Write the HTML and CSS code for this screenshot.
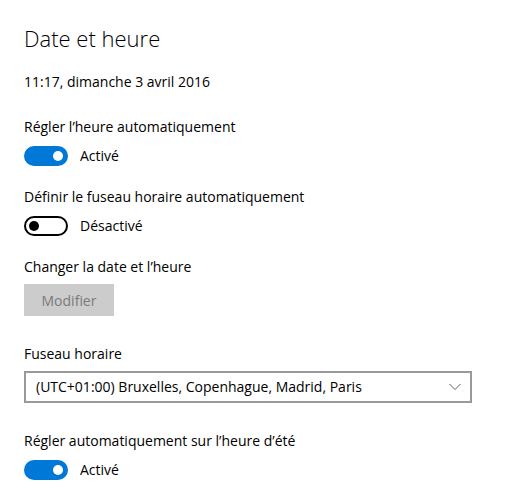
FILE: index.html
```html
<!DOCTYPE html>
<html lang="fr">
<head>
    <meta charset="UTF-8">
    <meta name="viewport" content="width=device-width, initial-scale=1.0">
    <title>Date et heure</title>
    <link rel="stylesheet" href="styles.css">
</head>
<body>

    <div class="page">
        <h1>Date et heure</h1>
        <div class="now">11:17, dimanche 3 avril 2016</div>

        <div class="setting first">
            <div class="label">Régler l’heure automatiquement</div>
            <div class="toggle-row">
                <span class="toggle on"><span class="knob"></span></span>
                <span>Activé</span>
            </div>
        </div>

        <div class="setting">
            <div class="label">Définir le fuseau horaire automatiquement</div>
            <div class="toggle-row">
                <span class="toggle"><span class="knob"></span></span>
                <span>Désactivé</span>
            </div>
        </div>

        <div class="setting">
            <div class="label tight">Changer la date et l’heure</div>
            <button type="button" class="btn" disabled>Modifier</button>
        </div>

        <div class="setting wide">
            <div class="label tight">Fuseau horaire</div>
            <div class="select">
                <span>(UTC+01:00) Bruxelles, Copenhague, Madrid, Paris</span>
                <svg width="12" height="8" viewBox="0 0 12 8"><path d="M0.5 1 L6 6.5 L11.5 1" fill="none" stroke="#5c5c5c" stroke-width="1"/></svg>
            </div>
        </div>

        <div class="setting wide">
            <div class="label">Régler automatiquement sur l’heure d’été</div>
            <div class="toggle-row">
                <span class="toggle on"><span class="knob"></span></span>
                <span>Activé</span>
            </div>
        </div>
    </div>

</body>
</html>
```

FILE: styles.css
```css
body {
    margin: 0;
    font-family: "Open Sans", "Noto Sans", sans-serif;
    font-size: 14px;
    line-height: 20px;
    color: #000;
    background: #fff;
}
.page {
    padding: 23px 24px 0 24px;
}
h1 {
    margin: 0;
    font-size: 22px;
    font-weight: 300;
    line-height: 30px;
}
.now {
    margin-top: 19px;
}
.setting {
    margin-top: 21px;
}
.setting.first {
    margin-top: 25px;
}
.setting.wide {
    margin-top: 28px;
}
.label {
    margin-bottom: 9px;
}
.label.tight {
    margin-bottom: 7px;
}
.toggle-row {
    display: flex;
    align-items: center;
    gap: 12px;
    height: 20px;
}
.toggle {
    box-sizing: border-box;
    width: 44px;
    height: 20px;
    border: 2px solid #000;
    border-radius: 10px;
    display: flex;
    align-items: center;
    padding: 0 3px;
}
.toggle .knob {
    width: 10px;
    height: 10px;
    border-radius: 50%;
    background: #000;
}
.toggle.on {
    background: #0078d7;
    border-color: #0078d7;
    justify-content: flex-end;
}
.toggle.on .knob {
    background: #fff;
}
.btn {
    display: block;
    width: 90px;
    height: 32px;
    border: none;
    background: #cccccc;
    color: #7a7a7a;
    font-family: inherit;
    font-size: 14px;
    padding: 0;
}
.select {
    box-sizing: border-box;
    width: 448px;
    height: 32px;
    border: 2px solid #999;
    display: flex;
    align-items: center;
    justify-content: space-between;
    padding: 0 9px 0 10px;
}
```
